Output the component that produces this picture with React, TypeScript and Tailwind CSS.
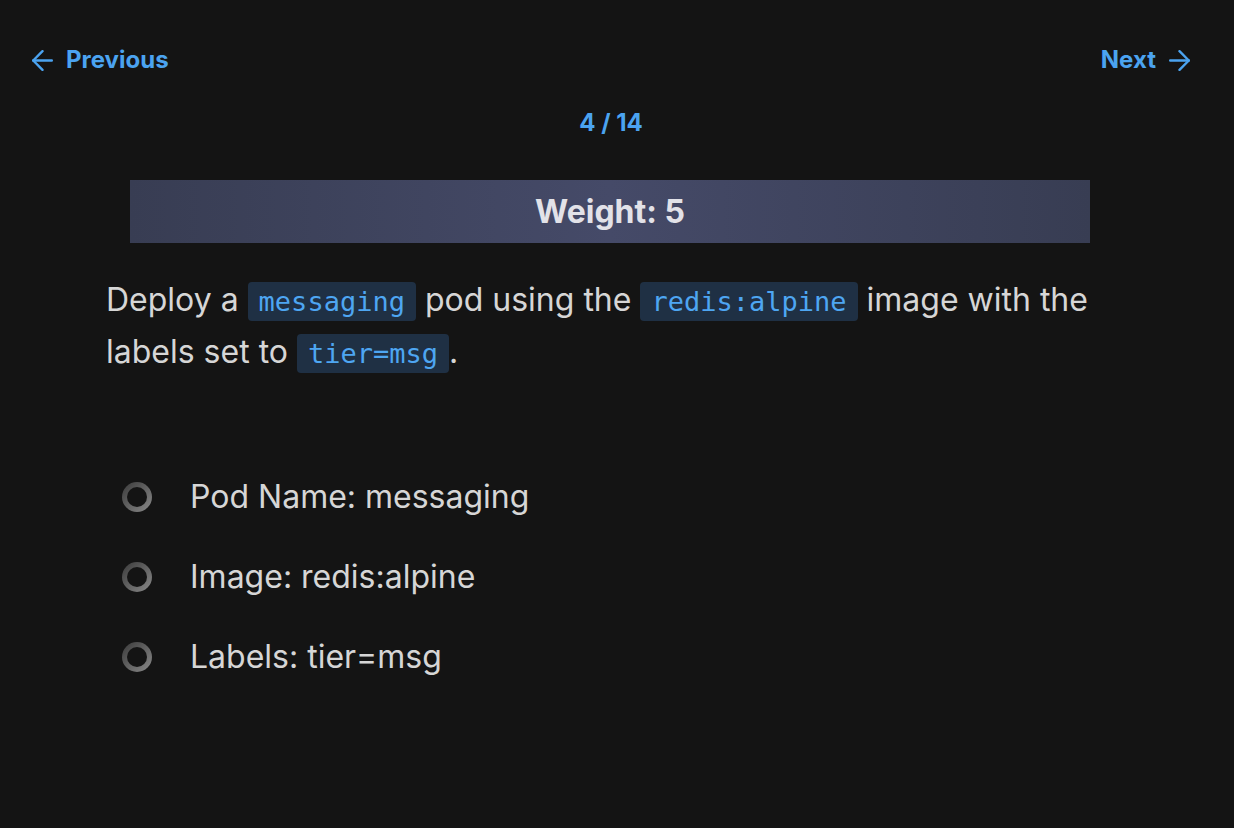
const checks = ["Pod Name: messaging", "Image: redis:alpine", "Labels: tier=msg"];

function Arrow({ dir }: { dir: "left" | "right" }) {
  return (
    <svg
      width="21"
      height="21"
      viewBox="5 5 14 14"
      fill="none"
      stroke="currentColor"
      strokeWidth="1.6"
      strokeLinecap="round"
      strokeLinejoin="round"
      className={dir === "right" ? "rotate-180" : ""}
    >
      <path d="M12 5.8 5.8 12l6.2 6.2" />
      <path d="M18.2 12H5.8" />
    </svg>
  );
}

function Code({ children }: { children: string }) {
  return (
    <code className="rounded-[4px] bg-[#1f3044] px-[11px] py-[4px] font-['DejaVu_Sans_Mono',monospace] text-[27px] text-[#4ea6f2]">
      {children}
    </code>
  );
}

export default function App() {
  return (
    <div className="min-h-[828px] bg-[#141414] font-['Inter',sans-serif] text-[#d6d6d6]">
      <div className="pl-[32px] pr-[44px] pt-[44px]">
        {/* Nav */}
        <div className="flex items-center justify-between text-[24px] font-bold leading-[32px] text-[#4ba3f0]">
          <button className="flex items-center gap-[13px]">
            <Arrow dir="left" />
            Previous
          </button>
          <button className="flex items-center gap-[13px]">
            Next
            <Arrow dir="right" />
          </button>
        </div>

        <p className="mt-[31px] text-center text-[24px] font-bold leading-[32px] text-[#4ba3f0]">4 / 14</p>

        {/* Weight banner */}
        <div className="ml-[98px] mr-[100px] mt-[41px] flex h-[63px] items-center justify-center bg-[linear-gradient(90deg,#383d53_0%,#454a68_50%,#383d53_100%)]">
          <span className="text-[32px] font-bold text-[#e2e2e8]">Weight: 5</span>
        </div>

        {/* Task */}
        <p className="ml-[74px] mr-[76px] mt-[32px] text-[32px] leading-[50px]">
          Deploy a <Code>messaging</Code> pod using the <Code>redis:alpine</Code> image with the labels set to{" "}
          <Code>tier=msg</Code>.
        </p>

        {/* Checklist */}
        <ul className="ml-[90px] mt-[98px] flex flex-col gap-[40px]">
          {checks.map((c) => (
            <li key={c} className="flex h-[40px] items-center gap-[38px] text-[32px]">
              <span className="h-[30px] w-[30px] shrink-0 rounded-full bg-[linear-gradient(135deg,#3a3a3a,#8a8a8a)] p-[5px]">
                <span className="block h-full w-full rounded-full bg-[#141414]" />
              </span>
              {c}
            </li>
          ))}
        </ul>
      </div>
    </div>
  );
}
